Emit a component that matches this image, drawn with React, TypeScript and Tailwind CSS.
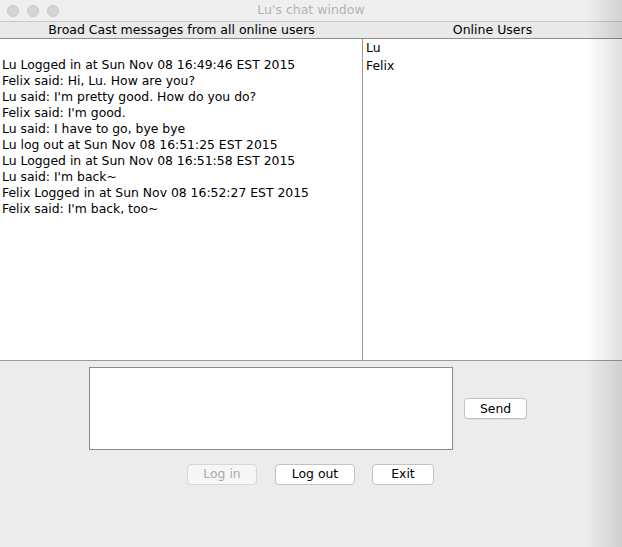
import React from "react";

const messages = [
  "",
  "Lu Logged in at Sun Nov 08 16:49:46 EST 2015",
  "Felix said: Hi, Lu. How are you?",
  "Lu said: I'm pretty good. How do you do?",
  "Felix said: I'm good.",
  "Lu said: I have to go, bye bye",
  "Lu log out at Sun Nov 08 16:51:25 EST 2015",
  "Lu Logged in at Sun Nov 08 16:51:58 EST 2015",
  "Lu said: I'm back~",
  "Felix Logged in at Sun Nov 08 16:52:27 EST 2015",
  "Felix said: I'm back, too~",
];

const font = { fontFamily: '"DejaVu Sans", "Noto Sans", sans-serif' };

export default function App() {
  return (
    <div
      className="relative w-[622px] h-[547px] bg-[#ececec] overflow-hidden flex flex-col text-black"
      style={font}
    >
      {/* title bar */}
      <div className="h-[22px] flex items-center border-b border-[#c8c8c8] bg-[#efefef] relative">
        <div className="flex gap-[8px] pl-[7px]">
          <div className="w-[12px] h-[12px] rounded-full bg-[#d5d5d5] border border-[#c8c8c8]" />
          <div className="w-[12px] h-[12px] rounded-full bg-[#d5d5d5] border border-[#c8c8c8]" />
          <div className="w-[12px] h-[12px] rounded-full bg-[#d5d5d5] border border-[#c8c8c8]" />
        </div>
        <div className="absolute inset-0 flex items-center justify-center text-[12.5px] text-[#b4b4b4]">
          Lu's chat window
        </div>
      </div>
      {/* header row */}
      <div className="h-[17px] flex border-b border-[#8e8e8e] bg-[#e9e9e9] text-[12.5px] leading-[16px]">
        <div className="w-[363px] text-center">Broad Cast messages from all online users</div>
        <div className="flex-1 text-center">Online Users</div>
      </div>
      {/* panels */}
      <div className="h-[322px] flex border-b border-[#9a9a9a] bg-white">
        <div className="w-[363px] border-r border-[#9a9a9a] pt-[2px] pl-[2px] text-[12.4px] leading-[16px]">
          {messages.map((m, i) => (
            <div key={i} className="h-[16px] whitespace-pre">
              {m}
            </div>
          ))}
        </div>
        <div className="flex-1 pl-[3px] pt-[0px] text-[12.4px] leading-[18px]">
          <div>Lu</div>
          <div>Felix</div>
        </div>
      </div>
      {/* input area */}
      <div className="flex items-center pt-[6px]">
        <div className="ml-[89px] w-[364px] h-[83px] bg-white border border-[#8a8a8a]" />
        <button className="ml-[11px] w-[63px] h-[21px] bg-white border border-[#c2c2c2] rounded-[4px] text-[12.4px] leading-[18px] shadow-[0_1px_0_rgba(0,0,0,0.05)]">
          Send
        </button>
      </div>
      {/* buttons */}
      <div className="flex pt-[14px] pl-[187px] text-[12.4px]">
        <button className="w-[70px] h-[21px] bg-[#f6f6f6] border border-[#d6d6d6] rounded-[4px] text-[#a8a8a8]">
          Log in
        </button>
        <button className="ml-[18px] w-[80px] h-[21px] bg-white border border-[#c2c2c2] rounded-[4px]">
          Log out
        </button>
        <button className="ml-[17px] w-[62px] h-[21px] bg-white border border-[#c2c2c2] rounded-[4px]">
          Exit
        </button>
      </div>
      {/* right edge shadow */}
      <div className="absolute top-0 right-0 bottom-0 w-[36px] bg-gradient-to-r from-transparent to-[rgba(0,0,0,0.12)] pointer-events-none" />
    </div>
  );
}
